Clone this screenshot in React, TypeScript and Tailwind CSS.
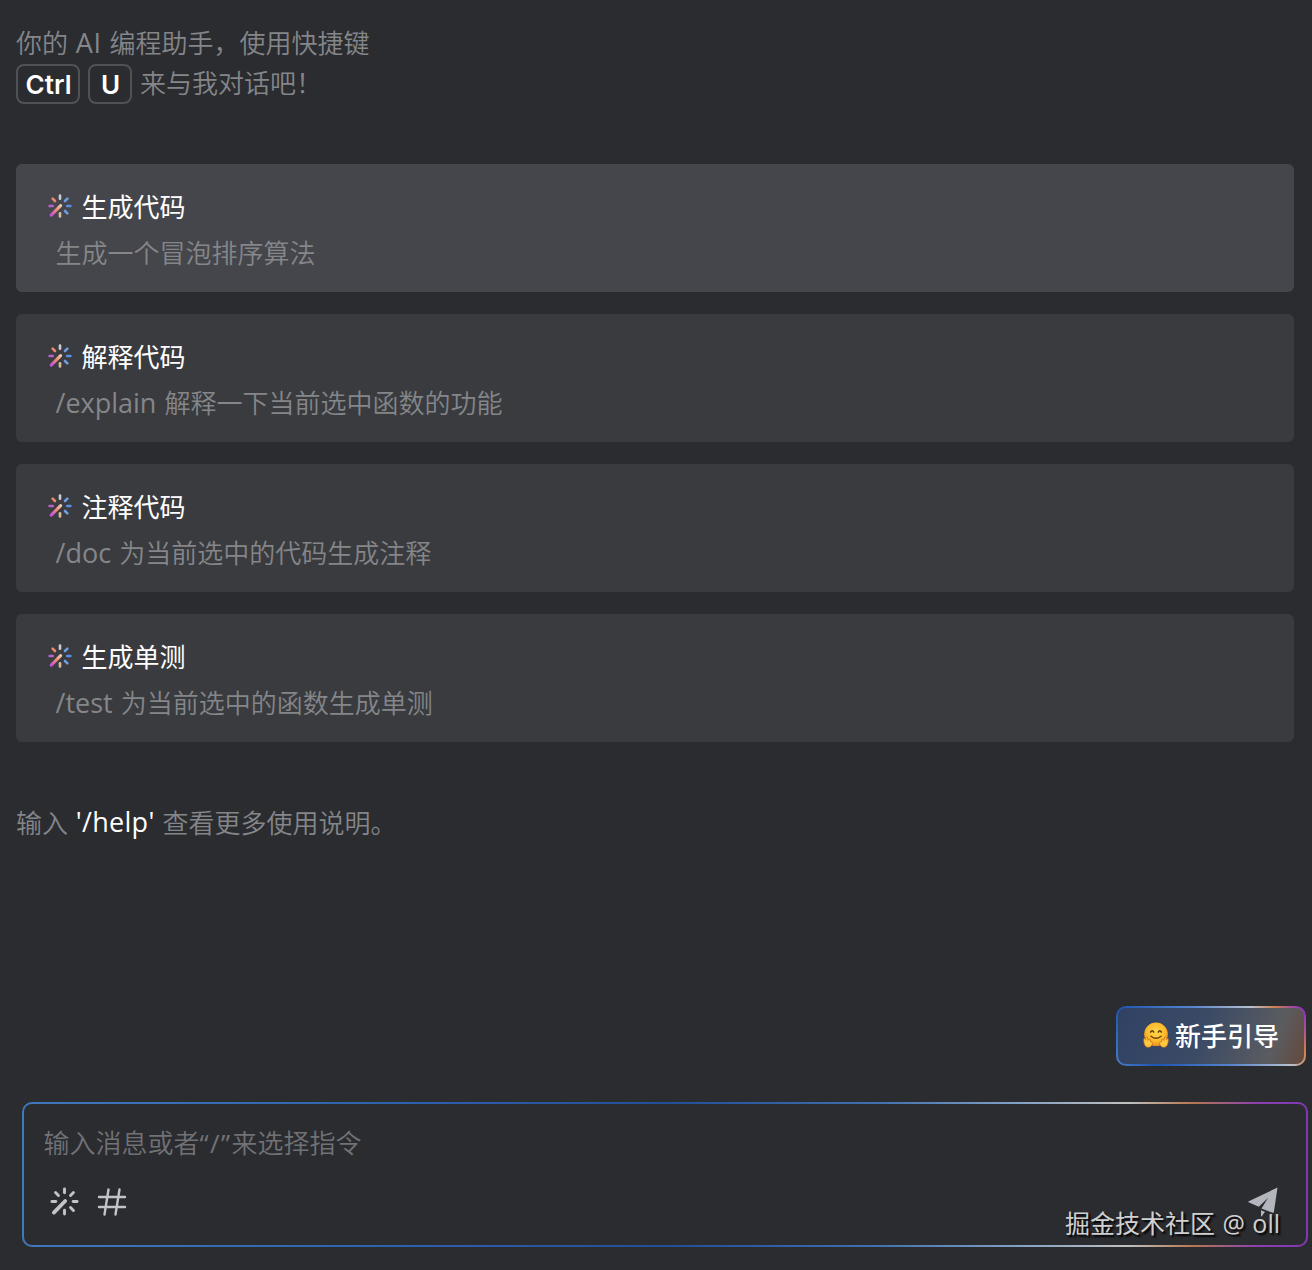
import { clsx } from "clsx";

const prompts = [
  { title: "生成代码", description: "生成一个冒泡排序算法", active: true },
  { title: "解释代码", command: "/explain", description: "解释一下当前选中函数的功能" },
  { title: "注释代码", command: "/doc", description: "为当前选中的代码生成注释" },
  { title: "生成单测", command: "/test", description: "为当前选中的函数生成单测" },
];

function WandIcon({ colored = false, className }: { colored?: boolean; className?: string }) {
  const c = (color: string) => (colored ? color : "#c3c4c7");

  return (
    <svg viewBox="0 0 24 24" fill="none" strokeWidth={colored ? 2.6 : 2.4} strokeLinecap="round" className={className} aria-hidden="true">
      <defs>
        <linearGradient id="wand" x1="3" y1="21" x2="13" y2="11" gradientUnits="userSpaceOnUse">
          <stop stopColor="#c14fe0" />
          <stop offset="0.55" stopColor="#f08a72" />
          <stop offset="1" stopColor="#e6d2c0" />
        </linearGradient>
      </defs>
      <path d="M12 1.6v3.2" stroke={c("#c9ccd4")} />
      <path d="M19.4 4.6l-2.4 2.4" stroke={c("#6f9fe0")} />
      <path d="M19.2 12h3.2" stroke={c("#5b8fe6")} />
      <path d="M17 17l2.4 2.4" stroke={c("#6f9fe0")} />
      <path d="M12 19.2v3.2" stroke={c("#d8b8a0")} />
      <path d="M1.6 12h3.2" stroke={c("#b860d0")} />
      <path d="M4.6 4.6l2.4 2.4" stroke={c("#e88a72")} />
      <path d="M3.2 21.2l9.4-9.6" stroke={colored ? "url(#wand)" : "#c3c4c7"} strokeWidth="3.1" />
    </svg>
  );
}

function HugIcon() {
  return (
    <svg viewBox="0 0 26 26" className="-mt-[2px] h-[26px] w-[26px]" aria-hidden="true">
      <defs>
        <radialGradient id="face" cx="0.5" cy="0.4" r="0.6">
          <stop stopColor="#ffd84a" />
          <stop offset="0.65" stopColor="#fdb92c" />
          <stop offset="1" stopColor="#ee8b1c" />
        </radialGradient>
      </defs>
      <circle cx="13" cy="12.3" r="11.8" fill="url(#face)" />
      <path d="M7.6 10.2q1.6-3 3.2 0M15.2 10.2q1.6-3 3.2 0" fill="none" stroke="#5d3b16" strokeWidth="1.5" strokeLinecap="round" />
      <path d="M8 14.2q5 4.2 10 0" fill="none" stroke="#6b3f12" strokeWidth="1.4" strokeLinecap="round" />
      <g fill="#ffc83d" stroke="#c8721c" strokeWidth="0.7">
        <path d="M.8 16.6q1.1-.6 1.8 1l.2-2.4q1.3-.9 1.7.8l.5 2.5q.9-2 2-1.4.9.6.1 2.2l1.9.8q1.1.9.2 2.4-1 2.7-4 2.8-2.9 0-3.7-2.7-1.1-3-.7-6z" />
        <path d="M25.2 16.6q-1.1-.6-1.8 1l-.2-2.4q-1.3-.9-1.7.8l-.5 2.5q-.9-2-2-1.4-.9.6-.1 2.200l-1.9.8q-1.1.9-.2 2.4 1 2.7 4 2.8 2.9 0 3.7-2.7 1.1-3 .7-6z" />
      </g>
    </svg>
  );
}

function Key({ children, className }: { children: string; className: string }) {
  return (
    <kbd className={clsx("flex h-10 items-center justify-center rounded-lg border-2 border-[#505155] pl-px pt-[2px] font-[Inter] text-[26px] font-semibold text-white", className)}>
      {children}
    </kbd>
  );
}

export default function App() {
  return (
    <div className="flex h-[1270px] w-[1312px] flex-col overflow-hidden bg-[#2b2c30] font-['Open_Sans','Noto_Sans_CJK_SC',sans-serif] text-[26px] font-[350] leading-10 text-[#84868a] [word-spacing:1px]">
      <header className="px-4 pt-[23px]">
        <p>
          你的 <span className="text-[27px] font-normal leading-none tracking-[0.7px]">AI</span> 编程助手，使用快捷键
        </p>
        <div className="mt-px flex items-center gap-2">
          <Key className="w-16">Ctrl</Key>
          <Key className="w-11">U</Key>
          <span className="-mt-[2px]">来与我对话吧！</span>
        </div>
      </header>

      <ul className="mt-[60px] flex flex-col gap-[22px] pl-4 pr-[18px]">
        {prompts.map(({ title, command, description, active }) => (
          <li key={title} className={clsx("h-32 rounded-md px-8 pt-[23px]", active ? "bg-[#45464b]" : "bg-[#3a3b3e]")}>
            <div className="flex items-center gap-[9.5px]">
              <WandIcon colored className="-mt-[2px] h-6 w-6" />
              <h2 className="font-normal text-white">{title}</h2>
            </div>
            <p className="mt-[6px] pl-[7.5px]">
              {command && <span className="text-[27px] font-normal leading-none">{command} </span>}
              {description}
            </p>
          </li>
        ))}
      </ul>

      <p className="mt-[61px] px-4">
        输入 <span className="relative -top-px text-[27px] font-normal leading-none tracking-[0.3px] text-white">'/help'</span> 查看更多使用说明。
      </p>

      <div className="mt-auto flex justify-end pr-[6px]">
        <button
          type="button"
          className="h-[60px] w-[190px] rounded-[10px] bg-[linear-gradient(56deg,#4a7cc4_0%,#1d56b0_18%,#5584cc_50%,#b8c0cc_76%,#d08050_86%,#9038c0_97%)] p-[2px]"
        >
          <span className="flex h-full items-center justify-center gap-[6px] rounded-lg bg-[linear-gradient(110deg,#304264_0%,#3b4a65_45%,#5a5c60_82%,#65493c_100%)] font-medium text-white">
            <HugIcon />
            新手引导
          </span>
        </button>
      </div>

      <div className="relative mb-[23px] ml-[21.5px] mr-1 mt-[35.500px] h-[145.500px] rounded-[10px] bg-[linear-gradient(90deg,#3f78bd_0%,#2c5ca8_35%,#224e98_50%,#3e6fae_66%,#7f9fc4_77%,#c0c0c0_86%,#b87850_91%,#8c40b0_96%,#8038b0_100%)] p-[2px]">
        <div className="flex h-full flex-col rounded-lg bg-[#2b2c30] px-5 pt-[19px]">
          <p className="text-[#717276]">
            输入消息或者<span className="font-normal tracking-[1.4px]">“/”</span>来选择指令
          </p>
          <div className="mt-6 flex items-center pl-[6px] pr-[8px]">
            <WandIcon className="h-[29px] w-[29px]" />
            <svg viewBox="0 0 30 28" fill="none" stroke="#c3c4c7" strokeWidth="2.4" strokeLinecap="round" className="ml-[18px] h-7 w-[30px]" aria-hidden="true">
              <path d="M2 9h26M2 19h26M11.5 1.5l-4 25M22.5 1.5l-4 25" />
            </svg>
            <svg viewBox="0 0 30 30" fill="#b4b6bd" className="ml-auto h-[30px] w-[30px]" aria-hidden="true">
              <path d="M29.5 0.5L0.8 14.2q-1 .8.2 1.4l9.8 4.2L20 11l-6.5 10.4 11.2 4.3q1 .2 1.2-.8zM13 23.2l4 1.5-3.2 4.5q-.8.6-.8-.5z" />
            </svg>
          </div>
        </div>
        <span className="absolute bottom-1 right-[28px] whitespace-nowrap text-[25px] font-normal text-[#d0d0d0] [text-shadow:2px_2px_2px_#000]">
          掘金技术社区 @ oll
        </span>
      </div>
    </div>
  );
}
